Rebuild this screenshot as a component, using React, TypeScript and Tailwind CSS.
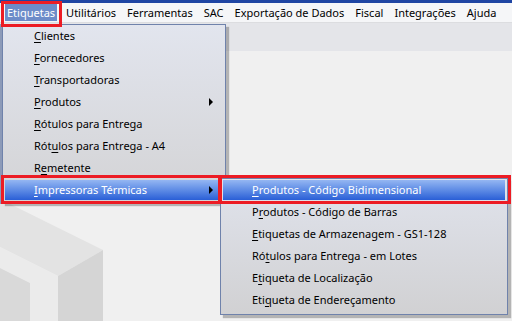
const menuBar = [
  "Etiquetas",
  "Utilitários",
  "Ferramentas",
  "SAC",
  "Exportação de Dados",
  "Fiscal",
  "Integrações",
  "Ajuda",
];

type Item = { label: string; key: number; sub?: boolean };

const mainItems: Item[] = [
  { label: "Clientes", key: 0 },
  { label: "Fornecedores", key: 0 },
  { label: "Transportadoras", key: 0 },
  { label: "Produtos", key: 0, sub: true },
  { label: "Rótulos para Entrega", key: 0 },
  { label: "Rótulos para Entrega - A4", key: 3 },
  { label: "Remetente", key: 1 },
  { label: "Impressoras Térmicas", key: 0, sub: true },
];

const subItems: Item[] = [
  { label: "Produtos - Código Bidimensional", key: 0 },
  { label: "Produtos - Código de Barras", key: 1 },
  { label: "Etiquetas de Armazenagem - GS1-128", key: 0 },
  { label: "Rótulos para Entrega - em Lotes", key: 2 },
  { label: "Etiqueta de Localização", key: 1 },
  { label: "Etiqueta de Endereçamento", key: 3 },
];

function Accel({ text, at }: { text: string; at: number }) {
  return (
    <span className="whitespace-nowrap">
      {text.slice(0, at)}
      <span className="underline underline-offset-2">{text[at]}</span>
      {text.slice(at + 1)}
    </span>
  );
}

function Arrow() {
  return (
    <svg width="5" height="8" viewBox="0 0 5 8" className="absolute right-[9px] top-[6px]">
      <polygon points="0,0 4,4 0,8" fill="#000" />
    </svg>
  );
}

function Row({ item, active }: { item: Item; active?: boolean }) {
  return (
    <div className="h-[22px] px-[2px] flex items-center">
      <div
        className={
          "relative w-full h-[20px] pl-[29px] flex items-center " +
          (active
            ? "bg-gradient-to-b from-[#94b6f2] to-[#2a5ed6] text-white"
            : "text-black")
        }
      >
        <Accel text={item.label} at={item.key} />
        {item.sub && <Arrow />}
      </div>
    </div>
  );
}

export default function App() {
  return (
    <div
      className="relative w-[512px] h-[321px] overflow-hidden bg-[#f0f0f0] text-[11px]"
      style={{ fontFamily: '"Noto Sans", "Open Sans", sans-serif' }}
    >
      {/* Top strip + menu bar */}
      <div className="h-[3px] bg-[#1f45a3]" />
      <div className="h-[20px] bg-[#f5f6f8] flex items-center gap-[7px] pl-[5px] border-b border-[#dcdde0]">
        {menuBar.map((m, i) => (
          <div
            key={m}
            className={
              "h-[17px] px-[2px] shrink-0 whitespace-nowrap flex items-center leading-none text-[11px] " +
              (i === 0 ? "bg-[#6d8cc9] text-white" : "text-black")
            }
          >
            {m}
          </div>
        ))}
      </div>
      {/* Toolbar band */}
      <div className="h-[28px] bg-[#e4e5e9]" />

      {/* Background cubes */}
      <svg className="absolute left-0 top-0" width="512" height="321" viewBox="0 0 512 321">
        <polygon points="0,204 8,203 103,250 58,276 0,247" fill="#e3e3e3" />
        <polygon points="58,276 103,250 103,321 58,321" fill="#d5d5d5" />
        <polygon points="0,247 58,276 58,321 30,321 30,283 0,268" fill="#ebebeb" />
        <polygon points="0,268 30,283 30,321 0,321" fill="#d9d9d9" />
      </svg>

      {/* Left dark edge */}
      <div className="absolute left-0 top-[24px] w-[2px] h-[180px] bg-[#8c9ab8]" />

      {/* Main dropdown */}
      <div className="absolute left-[2px] top-[24px] w-[224px] border border-[#6f82ab] bg-gradient-to-b from-[#e2e5ee] to-[#d3d3d5] shadow-[3px_3px_1px_rgba(0,0,0,0.25)] pb-[1px]">
        {mainItems.map((it, i) => (
          <Row key={it.label} item={it} active={i === 7} />
        ))}
      </div>

      {/* Submenu */}
      <div className="absolute left-[220px] top-[178px] w-[288px] border border-[#6f82ab] bg-gradient-to-b from-[#e0e3ec] to-[#d1d1d3] shadow-[3px_3px_1px_rgba(0,0,0,0.25)] pb-[3px]">
        {subItems.map((it, i) => (
          <Row key={it.label} item={it} active={i === 0} />
        ))}
      </div>

      {/* Red highlight boxes */}
      <div className="absolute left-[1px] top-[1px] w-[61px] h-[26px] border-[3px] border-[#ec1c24]" />
      <div className="absolute left-[1px] top-[175px] w-[220px] h-[29px] border-[3px] border-[#ec1c24]" />
      <div className="absolute left-[219px] top-[175px] w-[292px] h-[29px] border-[3px] border-[#ec1c24]" />
    </div>
  );
}
